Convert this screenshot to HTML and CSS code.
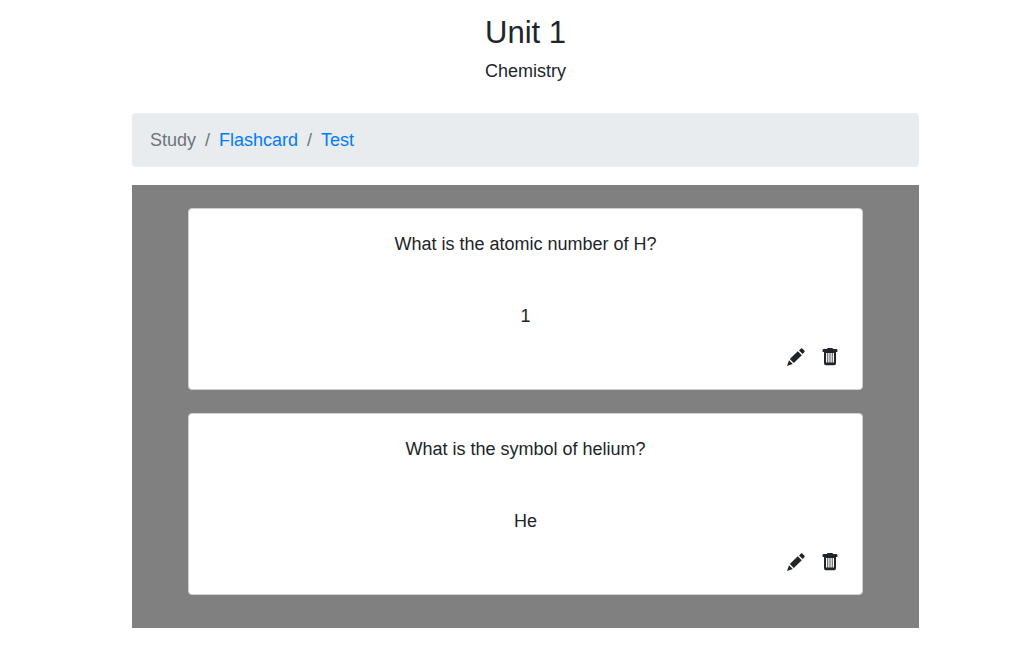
FILE: index.html
```html
<!DOCTYPE html>
<html lang="en">
<head>
<meta charset="utf-8">
<title>Unit 1</title>
<meta name="viewport" content="width=device-width, initial-scale=1">
<link rel="stylesheet" href="styles.css">
</head>
<body>
<svg class="sprite" aria-hidden="true">
  <symbol id="pencil" viewBox="0 0 18 18">
    <path d="M0 18 2 12.2 5.8 16ZM2.8 11 10.8 3.2 14.8 7.2 6.8 15ZM12 2.4 14 .5Q14.6 0 15.2.5L17.5 2.8Q18 3.4 17.5 4L15.6 6Z"/>
  </symbol>
  <symbol id="trash" viewBox="0 0 18 18">
    <path fill-rule="evenodd" d="M6 1Q6 0 7 0H11Q12 0 12 1H15.5Q16.4 1 16.4 2V4H1.6V2Q1.6 1 2.5 1ZM3 4H15V15Q15 17.2 13.2 17.2H4.8Q3 17.2 3 15ZM5 5V14.5H6.4V5ZM7.2 5V14.5H8.6V5ZM9.4 5V14.5H10.8V5ZM11.6 5V14.5H13V5Z"/>
  </symbol>
</svg>
<main class="page">
  <header class="heading">
    <h1 class="title">Unit 1</h1>
    <p class="subject">Chemistry</p>
  </header>
  <nav aria-label="Breadcrumb">
    <ol class="breadcrumb">
      <li class="crumb current" aria-current="page">Study</li>
      <li class="crumb"><a href="#flashcard">Flashcard</a></li>
      <li class="crumb"><a href="#test">Test</a></li>
    </ol>
  </nav>
  <section class="deck">
    <article class="card">
      <p class="question">What is the atomic number of H?</p>
      <p class="answer">1</p>
      <div class="actions">
        <button class="action" type="button" aria-label="Edit"><svg class="icon"><use href="#pencil"/></svg></button>
        <button class="action" type="button" aria-label="Delete"><svg class="icon"><use href="#trash"/></svg></button>
      </div>
    </article>
    <article class="card">
      <p class="question">What is the symbol of helium?</p>
      <p class="answer">He</p>
      <div class="actions">
        <button class="action" type="button" aria-label="Edit"><svg class="icon"><use href="#pencil"/></svg></button>
        <button class="action" type="button" aria-label="Delete"><svg class="icon"><use href="#trash"/></svg></button>
      </div>
    </article>
  </section>
</main>
</body>
</html>
```
FILE: styles.css
```css
* {
  box-sizing: border-box;
}

body {
  margin: 0;
  background: #fff;
  color: #212529;
  font-family: "Liberation Sans", Arial, sans-serif;
  font-size: 18px;
  line-height: 27px;
}

.sprite {
  display: none;
}

.page {
  padding: 14px 95px 42px 132px;
}

.heading {
  margin-bottom: 28px;
  text-align: center;
}

.title {
  margin: 0 0 6px;
  font-size: 31px;
  font-weight: 400;
  line-height: 38px;
}

.subject,
.question,
.answer {
  margin: 0;
}

.breadcrumb {
  display: flex;
  flex-wrap: wrap;
  margin: 0 0 18px;
  padding: 14px 18px 13px;
  border-radius: 4px;
  background: #e9ecef;
  list-style: none;
}

.crumb + .crumb::before {
  content: "/";
  padding: 0 9px;
  color: #6c757d;
}

.crumb a {
  color: #007bff;
  text-decoration: none;
}

.current {
  color: #6c757d;
}

.deck {
  display: flex;
  flex-direction: column;
  gap: 23px;
  padding: 23px 56px 33px;
  background: #808080;
}

.card {
  padding: 22px 23px 23px;
  border: 1px solid #d0d0d0;
  border-radius: 4px;
  background: #fff;
  text-align: center;
}

.question {
  margin-bottom: 45px;
}

.answer {
  margin-bottom: 18px;
}

.actions {
  display: flex;
  justify-content: flex-end;
  gap: 16px;
}

.action {
  padding: 0;
  border: 0;
  background: none;
  color: inherit;
  cursor: pointer;
}

.icon {
  display: block;
  width: 18px;
  height: 18px;
  fill: currentColor;
}
```
